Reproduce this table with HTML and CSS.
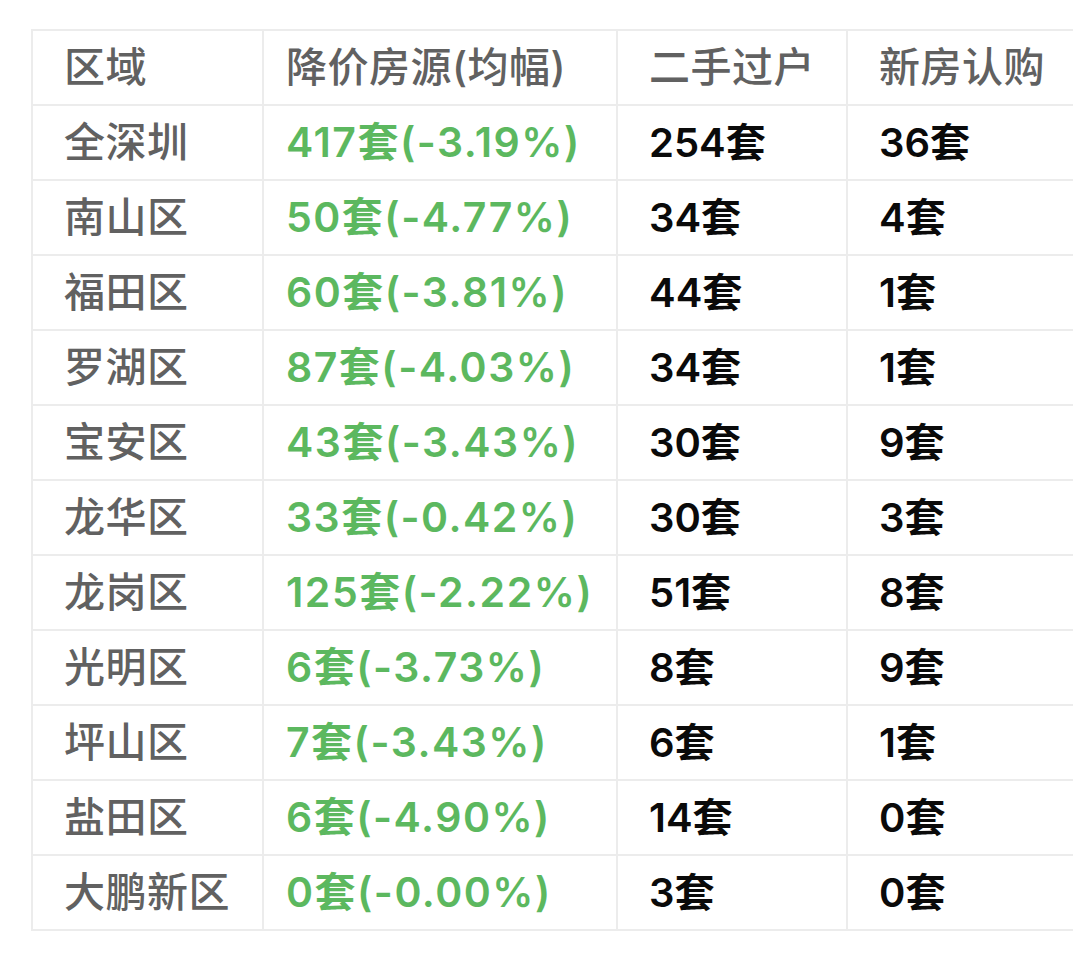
FILE: index.html
```html
<!DOCTYPE html>
<html lang="zh-CN">
<head>
<meta charset="utf-8">
<title>深圳降价房源</title>
<link rel="stylesheet" href="styles.css">
</head>
<body>
<table class="stats">
  <thead>
    <tr><th>区域</th><th>降价房源(均幅)</th><th>二手过户</th><th>新房认购</th></tr>
  </thead>
  <tbody>
    <tr><td>全深圳</td><td class="drop">417套(-3.19%)</td><td class="num">254套</td><td class="num">36套</td></tr>
    <tr><td>南山区</td><td class="drop">50套(-4.77%)</td><td class="num">34套</td><td class="num">4套</td></tr>
    <tr><td>福田区</td><td class="drop">60套(-3.81%)</td><td class="num">44套</td><td class="num">1套</td></tr>
    <tr><td>罗湖区</td><td class="drop">87套(-4.03%)</td><td class="num">34套</td><td class="num">1套</td></tr>
    <tr><td>宝安区</td><td class="drop">43套(-3.43%)</td><td class="num">30套</td><td class="num">9套</td></tr>
    <tr><td>龙华区</td><td class="drop">33套(-0.42%)</td><td class="num">30套</td><td class="num">3套</td></tr>
    <tr><td>龙岗区</td><td class="drop">125套(-2.22%)</td><td class="num">51套</td><td class="num">8套</td></tr>
    <tr><td>光明区</td><td class="drop">6套(-3.73%)</td><td class="num">8套</td><td class="num">9套</td></tr>
    <tr><td>坪山区</td><td class="drop">7套(-3.43%)</td><td class="num">6套</td><td class="num">1套</td></tr>
    <tr><td>盐田区</td><td class="drop">6套(-4.90%)</td><td class="num">14套</td><td class="num">0套</td></tr>
    <tr><td>大鹏新区</td><td class="drop">0套(-0.00%)</td><td class="num">3套</td><td class="num">0套</td></tr>
  </tbody>
</table>
</body>
</html>
```
FILE: styles.css
```css
html, body {
  margin: 0;
  padding: 0;
  background: #ffffff;
  overflow: hidden;
}
body {
  padding: 29px 0 0 31px;
  font-family: "Inter", "Noto Sans CJK SC", sans-serif;
}
.stats {
  border-collapse: collapse;
  table-layout: fixed;
  width: 1100px;
}
.stats th, .stats td {
  border: 2px solid #ececec;
  height: 73px;
  padding: 0 0 0 31px;
  text-align: left;
  vertical-align: middle;
  font-size: 41px;
  letter-spacing: 0.5px;
  white-space: nowrap;
  color: #616161;
  font-weight: 500;
  line-height: 1;
}
.stats th:nth-child(1) { width: 198px; }
.stats th:nth-child(2) { width: 330px; }
.stats th:nth-child(3) { width: 197px; }
.stats th:nth-child(2), .stats td:nth-child(2) { padding-left: 22px; }
.stats td.drop {
  color: #5cb85f;
  font-weight: 600;
  letter-spacing: 1.5px;
}
.stats td.num {
  font-size: 40px;
  letter-spacing: 0;
  color: #0a0a0a;
  font-weight: 600;
}
```
